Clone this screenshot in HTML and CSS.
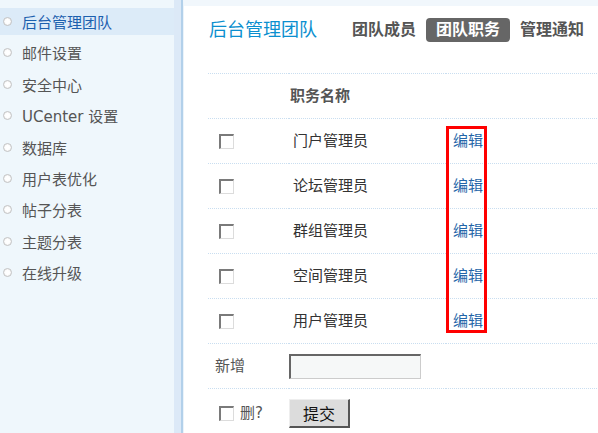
FILE: index.html
```html
<!DOCTYPE html>
<html lang="zh-CN">
<head>
<meta charset="utf-8">
<title>后台管理团队</title>
<link rel="stylesheet" href="styles.css">
</head>
<body>
<div class="page">
  <aside class="side">
    <ul class="menu">
      <li class="item active"><span class="dot"></span>后台管理团队</li>
      <li class="item"><span class="dot"></span>邮件设置</li>
      <li class="item"><span class="dot"></span>安全中心</li>
      <li class="item"><span class="dot"></span>UCenter 设置</li>
      <li class="item"><span class="dot"></span>数据库</li>
      <li class="item"><span class="dot"></span>用户表优化</li>
      <li class="item"><span class="dot"></span>帖子分表</li>
      <li class="item"><span class="dot"></span>主题分表</li>
      <li class="item"><span class="dot"></span>在线升级</li>
    </ul>
  </aside>
  <main class="main">
    <div class="head">
      <h1 class="title">后台管理团队</h1>
      <nav class="tabs">
        <span class="tab">团队成员</span>
        <span class="tab current">团队职务</span>
        <span class="tab">管理通知</span>
      </nav>
    </div>
    <div class="tablewrap">
      <table class="grid">
        <colgroup><col class="c1"><col class="c2"><col></colgroup>
        <tr class="hdr"><td></td><td class="th">职务名称</td><td></td></tr>
        <tr><td class="ck"><input type="checkbox" class="cb"></td><td><span class="name">门户管理员</span></td><td class="op"><a class="edit">编辑</a></td></tr>
        <tr><td class="ck"><input type="checkbox" class="cb"></td><td><span class="name">论坛管理员</span></td><td class="op"><a class="edit">编辑</a></td></tr>
        <tr><td class="ck"><input type="checkbox" class="cb"></td><td><span class="name">群组管理员</span></td><td class="op"><a class="edit">编辑</a></td></tr>
        <tr><td class="ck"><input type="checkbox" class="cb"></td><td><span class="name">空间管理员</span></td><td class="op"><a class="edit">编辑</a></td></tr>
        <tr><td class="ck"><input type="checkbox" class="cb"></td><td><span class="name">用户管理员</span></td><td class="op"><a class="edit">编辑</a></td></tr>
        <tr><td class="lbl">新增</td><td><input type="text" class="txt"></td><td></td></tr>
        <tr class="last"><td class="ck"><label class="del"><input type="checkbox" class="cb"><span>删?</span></label></td><td><button class="btn" type="button">提交</button></td><td></td></tr>
      </table>
      <div class="mark"></div>
    </div>
  </main>
</div>
</body>
</html>
```
FILE: styles.css
```css
html, body {
  margin: 0;
  padding: 0;
  background: #fff;
}
body {
  font-family: "DejaVu Sans", "Noto Sans CJK SC", sans-serif;
  font-size: 15px;
  color: #333;
  height: 433px;
  overflow: hidden;
}
.page {
  display: flex;
  height: 433px;
}
.side {
  width: 181px;
  flex: none;
  background: #dce9f7;
  border-right: 2px solid #b2d0ea;
  height: 100%;
}
.menu {
  list-style: none;
  margin: 0;
  padding: 8px 0 0;
  width: 174px;
  height: 100%;
  box-sizing: border-box;
  background: #eff7fc;
}
.item {
  display: flex;
  align-items: center;
  height: 27px;
  margin-bottom: 4.375px;
  padding-left: 3px;
  color: #555;
  font-size: 15px;
}
.item.active {
  background: #dcebf8;
  color: #1c60ae;
}
.dot {
  width: 7px;
  height: 7px;
  border: 1px solid #c4c4c4;
  border-radius: 50%;
  background: radial-gradient(circle, #fff 40%, #e6e6e6 100%);
  margin-right: 10px;
  flex: none;
}
.main {
  flex: 1;
  border-left: 1px solid #eaf3fa;
  border-top: 6px solid #f1f7fc;
  padding-left: 24px;
  min-width: 0;
}
.head {
  display: flex;
  align-items: center;
  height: 24px;
  margin-top: 12px;
  margin-bottom: 31px;
}
.title {
  margin: 0 25px 0 1px;
  font-size: 18px;
  font-weight: normal;
  color: #0b8fcf;
  line-height: 24px;
}
.tabs {
  display: flex;
  align-items: center;
}
.tab {
  padding: 0 10px;
  height: 24px;
  line-height: 24px;
  font-size: 16px;
  font-weight: bold;
  color: #555;
}
.tab.current {
  background: #666;
  color: #fff;
  border-radius: 4px;
}
.tablewrap {
  position: relative;
}
.grid {
  width: 389px;
  table-layout: fixed;
  border-collapse: separate;
  border-spacing: 0;
  line-height: 20px;
}
.c1 { width: 81px; }
.c2 { width: 157px; }
.grid td {
  height: 44px;
  padding: 0;
  border-top: 1px dotted #c9def0;
  vertical-align: middle;
}
.grid tr.last td {
  height: 48px;
}
.th {
  font-weight: bold;
  color: #555;
  padding-left: 1px !important;
}
.ck {
  padding-left: 11px !important;
}
.lbl {
  padding-left: 7px !important;
  color: #555;
}
.name {
  margin-left: 4px;
  color: #333;
}
.op {
  padding-left: 7px !important;
}
.edit {
  color: #2465a8;
  text-decoration: none;
}
.cb {
  appearance: none;
  -webkit-appearance: none;
  width: 15px;
  height: 15px;
  box-sizing: border-box;
  margin: 0;
  background: #fff;
  border-top: 2px solid #7a7a7a;
  border-left: 2px solid #7a7a7a;
  border-right: 1px solid #dcdcdc;
  border-bottom: 1px solid #dcdcdc;
  vertical-align: middle;
  display: block;
}
.del {
  display: flex;
  align-items: center;
  gap: 6px;
  color: #555;
}
.txt {
  width: 132px;
  height: 25px;
  box-sizing: border-box;
  margin: 0;
  display: block;
  background: #f6f8f8;
  border-top: 2px solid #666;
  border-left: 2px solid #666;
  border-right: 1px solid #ccc;
  border-bottom: 1px solid #ccc;
}
.btn {
  width: 61px;
  height: 29px;
  box-sizing: border-box;
  margin: 0;
  display: block;
  background: #dcdcdc;
  border-top: 1px solid #eee;
  border-left: 1px solid #eee;
  border-right: 2px solid #555;
  border-bottom: 2px solid #555;
  font-family: "Noto Sans CJK SC", sans-serif;
  font-size: 16px;
  line-height: 20px;
  color: #111;
  padding: 0;
}
.mark {
  position: absolute;
  left: 238px;
  top: 53px;
  width: 41px;
  height: 207px;
  box-sizing: border-box;
  border: 3px solid #f00;
  pointer-events: none;
}
```
